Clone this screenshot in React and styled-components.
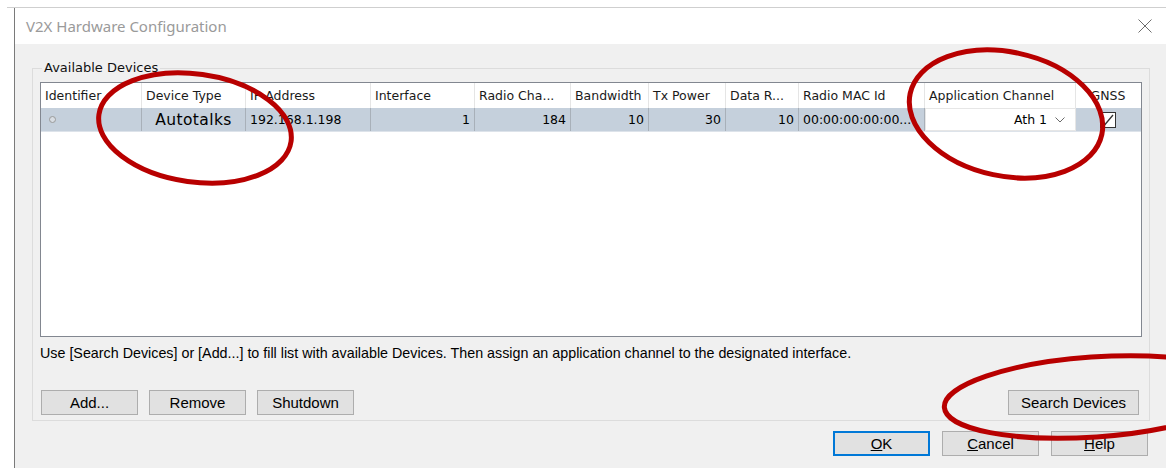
import React from 'react';
import styled, { createGlobalStyle } from 'styled-components';

const GlobalStyle = createGlobalStyle`
  html, body {
    margin: 0;
    padding: 0;
    background: #fff;
    overflow: hidden;
  }
`;

const columns = [
  { key: 'id', title: 'Identifier', width: 101 },
  { key: 'type', title: 'Device Type', width: 104 },
  { key: 'ip', title: 'IP Address', width: 125 },
  { key: 'iface', title: 'Interface', width: 104 },
  { key: 'chan', title: 'Radio Cha...', width: 96 },
  { key: 'bw', title: 'Bandwidth', width: 78 },
  { key: 'tx', title: 'Tx Power', width: 77 },
  { key: 'rate', title: 'Data R...', width: 73 },
  { key: 'mac', title: 'Radio MAC Id', width: 126 },
  { key: 'app', title: 'Application Channel', width: 151 },
  { key: 'gnss', title: 'GNSS', width: 64, center: true },
];

const gridCols = columns.map(c => `${c.width}px`).join(' ');

const Stage = styled.div`
  position: relative;
  width: 1166px;
  height: 468px;
  overflow: hidden;
  padding-top: 7px;
  box-sizing: border-box;
`;

const BackRule = styled.div`
  height: 1px;
  margin-left: 7px;
  background: #cfcfcf;
`;

const Window = styled.div`
  margin-left: 14px;
  width: 1152px;
  height: 460px;
  border-left: 1px solid #7a7a7a;
  background: #f0f0f0;
  box-sizing: border-box;
`;

const TitleBar = styled.div`
  height: 36px;
  background: #fff;
  display: flex;
  align-items: center;
  justify-content: space-between;
  padding: 0 14px 0 11px;
  font-family: 'Noto Sans', 'Open Sans', sans-serif;
  font-size: 15px;
  color: #9a9a9a;
`;

const CloseIcon = () => (
  <svg width="14" height="14" viewBox="0 0 14 14">
    <path d="M0.5 0.5 L13.5 13.5 M13.5 0.5 L0.5 13.5" stroke="#6d6d6d" strokeWidth="1" fill="none" />
  </svg>
);

const Body = styled.div`
  padding-left: 17px;
`;

const GroupBox = styled.fieldset`
  width: 1118px;
  box-sizing: border-box;
  margin: 16px 0 0 0;
  padding: 0 7px 5px 7px;
  border: 1px solid #dcdcdc;
  min-inline-size: 0;
`;

const Legend = styled.legend`
  margin-left: 2px;
  padding: 0 2px;
  font-family: 'DejaVu Sans', Verdana, sans-serif;
  font-size: 13px;
  line-height: 16px;
  color: #111;
`;

const Table = styled.div`
  margin-top: 6px;
  height: 255px;
  box-sizing: border-box;
  border: 1px solid #828790;
  background: #fff;
  font-family: 'DejaVu Sans', Verdana, sans-serif;
  font-size: 12.5px;
  color: #000;
`;

const HeaderRow = styled.div`
  display: grid;
  grid-template-columns: ${gridCols};
  height: 25px;
`;

const HeaderCell = styled.div`
  display: flex;
  align-items: center;
  justify-content: ${p => (p.$center ? 'center' : 'flex-start')};
  padding: 0 4px;
  border-right: 1px solid #e5e5e5;
  white-space: nowrap;
  overflow: hidden;
  color: #1a1a1a;
  &:last-child {
    border-right: none;
  }
`;

const DataRow = styled.div`
  display: grid;
  grid-template-columns: ${gridCols};
  height: 23px;
  background: #c5d0dc;
  border-bottom: 1px solid #dde3ea;
`;

const Cell = styled.div`
  display: flex;
  align-items: center;
  justify-content: ${p => p.$align || 'flex-start'};
  padding: 0 4px;
  border-right: 1px solid #a8b0b9;
  white-space: nowrap;
  overflow: hidden;
  font-size: ${p => (p.$large ? '15.5px' : 'inherit')};
  letter-spacing: ${p => (p.$large ? '0.4px' : 'normal')};
  &:last-child {
    border-right: none;
  }
`;

const ComboCell = styled(Cell)`
  background: #fff;
  border: 1px solid #e6e6e6;
  gap: 8px;
  padding-right: 10px;
`;

const RowMarker = styled.span`
  width: 5px;
  height: 5px;
  margin-left: 4px;
  border: 1px solid #9a9a9a;
  border-radius: 50%;
  background: #d8dde3;
`;

const Chevron = () => (
  <svg width="10" height="6" viewBox="0 0 10 6">
    <polyline points="0.5,0.5 5,5 9.5,0.5" stroke="#6a6a6a" strokeWidth="1" fill="none" />
  </svg>
);

const CheckBox = () => (
  <svg width="16" height="16" viewBox="0 0 16 16">
    <rect x="0.5" y="0.5" width="15" height="15" fill="#fff" stroke="#333" />
    <polyline points="3,9 5,12.5 13,3" stroke="#333" strokeWidth="1.3" fill="none" />
  </svg>
);

const Hint = styled.div`
  margin-top: 8px;
  font-family: 'Liberation Sans', Arial, sans-serif;
  font-size: 14.3px;
  line-height: 16px;
  color: #000;
`;

const ButtonRow = styled.div`
  display: flex;
  gap: 11px;
  margin-top: 29px;
  padding-left: 1px;
  padding-right: 3px;
`;

const Button = styled.button`
  width: ${p => p.$width || 97}px;
  height: 25px;
  margin: 0;
  padding: 0;
  box-sizing: border-box;
  background: #e1e1e1;
  border: ${p => (p.$default ? '2px solid #0078d7' : '1px solid #adadad')};
  font-family: 'Liberation Sans', Arial, sans-serif;
  font-size: 15px;
  color: #000;
  ${p => (p.$push ? 'margin-left: auto;' : '')}
`;

const Footer = styled.div`
  width: 1118px;
  display: flex;
  justify-content: flex-end;
  gap: 12px;
  margin-top: 10px;
  padding-right: 2px;
  box-sizing: border-box;
`;

const Marks = styled.svg`
  position: absolute;
  left: 0;
  top: 0;
  pointer-events: none;
`;

const device = {
  type: 'Autotalks',
  ip: '192.168.1.198',
  iface: 1,
  chan: 184,
  bw: 10,
  tx: 30,
  rate: 10,
  mac: '00:00:00:00:00...',
  app: 'Ath 1',
};

export default function App() {
  return (
    <>
      <GlobalStyle />
      <Stage>
        <BackRule />
        <Window>
          <TitleBar>
            <span>V2X Hardware Configuration</span>
            <CloseIcon />
          </TitleBar>
          <Body>
            <GroupBox>
              <Legend>Available Devices</Legend>
              <Table>
                <HeaderRow>
                  {columns.map(c => (
                    <HeaderCell key={c.key} $center={c.center}>{c.title}</HeaderCell>
                  ))}
                </HeaderRow>
                <DataRow>
                  <Cell><RowMarker /></Cell>
                  <Cell $align="center" $large>{device.type}</Cell>
                  <Cell>{device.ip}</Cell>
                  <Cell $align="flex-end">{device.iface}</Cell>
                  <Cell $align="flex-end">{device.chan}</Cell>
                  <Cell $align="flex-end">{device.bw}</Cell>
                  <Cell $align="flex-end">{device.tx}</Cell>
                  <Cell $align="flex-end">{device.rate}</Cell>
                  <Cell>{device.mac}</Cell>
                  <ComboCell $align="flex-end">{device.app}<Chevron /></ComboCell>
                  <Cell $align="center"><CheckBox /></Cell>
                </DataRow>
              </Table>
              <Hint>
                Use [Search Devices] or [Add...] to fill list with available Devices. Then assign an application channel to the designated interface.
              </Hint>
              <ButtonRow>
                <Button>Add...</Button>
                <Button>Remove</Button>
                <Button>Shutdown</Button>
                <Button $push $width={131}>Search Devices</Button>
              </ButtonRow>
            </GroupBox>
            <Footer>
              <Button $default><u>O</u>K</Button>
              <Button><u>C</u>ancel</Button>
              <Button><u>H</u>elp</Button>
            </Footer>
          </Body>
        </Window>
        <Marks width="1166" height="468" viewBox="0 0 1166 468">
          <g fill="none" stroke="#b80000" strokeWidth="5">
            <ellipse cx="195" cy="128" rx="97" ry="54" transform="rotate(8 195 128)" />
            <ellipse cx="1006" cy="114" rx="98" ry="62" transform="rotate(12 1006 114)" />
            <ellipse cx="1094" cy="397" rx="150" ry="40" transform="rotate(-4 1094 397)" />
          </g>
        </Marks>
      </Stage>
    </>
  );
}
